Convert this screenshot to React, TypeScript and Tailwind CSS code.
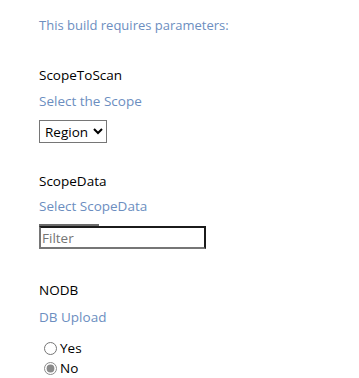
export default function App() {
  return (
    <div className="min-h-screen bg-white pl-[39px] pt-[15px] text-[13.5px] leading-[20px]" style={{ fontFamily: '"Segoe UI", "Open Sans", sans-serif' }}>
      <p className="text-[13px] text-[#6c8ebf]">This build requires parameters:</p>

      {/* ScopeToScan */}
      <div className="mt-[30px]">
        <div className="text-black">ScopeToScan</div>
        <div className="mt-[6px] text-[#6c8ebf]">Select the Scope</div>
        <select className="mt-[9px] h-[23px] border border-[#767676] bg-white px-[1px] text-[13.5px] text-black" defaultValue="Region">
          <option>Region</option>
        </select>
      </div>

      {/* ScopeData */}
      <div className="mt-[28px]">
        <div className="text-black">ScopeData</div>
        <div className="mt-[5px] text-[#6c8ebf]">Select ScopeData</div>
        <div className="mt-[8px] h-[2px] w-[60px] bg-[#6b6b6b]" />
        <input
          placeholder="Filter"
          className="block h-[23px] w-[167px] border-2 border-t-[#1b1b1b] border-l-[#767676] border-r-[#1b1b1b] border-b-[#767676] px-[1px] text-[13.5px] placeholder:text-[#757575]"
        />
      </div>

      {/* NODB */}
      <div className="mt-[31px]">
        <div className="text-black">NODB</div>
        <div className="mt-[7px] text-[#6c8ebf]">DB Upload</div>
        <div className="mt-[11px] flex flex-col">
          <label className="flex items-center gap-[3px] pl-[5px]">
            <input type="radio" name="nodb" className="m-0 h-[13px] w-[13px]" />
            <span>Yes</span>
          </label>
          <label className="flex items-center gap-[3px] pl-[5px]">
            <input type="radio" name="nodb" defaultChecked className="m-0 h-[13px] w-[13px] accent-[#8a8a8a]" />
            <span>No</span>
          </label>
        </div>
      </div>
    </div>
  );
}
